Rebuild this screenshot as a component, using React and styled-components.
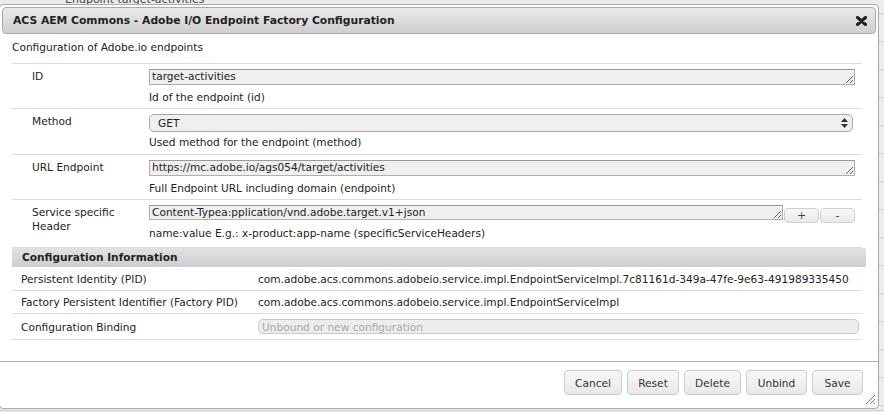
import React from "react";
import styled, { createGlobalStyle } from "styled-components";

const GlobalStyle = createGlobalStyle`
  html, body {
    margin: 0;
    padding: 0;
  }
  body {
    background: #ececec;
    font-family: "DejaVu Sans", Verdana, sans-serif;
    font-size: 10.6px;
    color: #222;
  }
`;

const Page = styled.div`
  position: relative;
  width: 884px;
  height: 412px;
  overflow: hidden;
  background: #ececec;
`;

// the page behind the dialog, only its edges show
const BgTable = styled.div`
  margin-top: -13px;
  display: flex;
  flex-direction: column;
`;

const BgRow = styled.div`
  height: ${(p) => p.h || 26}px;
  line-height: ${(p) => p.h || 26}px;
  border-bottom: 1px solid #cfcfcf;
  padding-left: ${(p) => p.indent || 38}px;
  color: #444;
  font-size: 11px;
  white-space: nowrap;
`;

const Dialog = styled.div`
  position: absolute;
  left: -1px;
  top: 4px;
  width: 880px;
  height: 405px;
  box-sizing: border-box;
  border: 1px solid #a9a9a9;
  border-radius: 4px;
  background: #fff;
  padding: 2px;
  display: flex;
  flex-direction: column;
`;

const TitleBar = styled.div`
  height: 27px;
  box-sizing: border-box;
  border: 1px solid #aaa;
  border-radius: 4px;
  background: linear-gradient(#e9e9e9, #cfcfcf);
  display: flex;
  align-items: center;
  justify-content: space-between;
  padding: 0 8px 0 10px;
`;

const Title = styled.span`
  font-weight: bold;
  font-size: 10.75px;
  color: #222;
`;

const CloseButton = styled.span`
  display: flex;
  width: 12px;
  height: 12px;
  align-items: center;
  justify-content: center;
`;

const Content = styled.div`
  padding: 5px 0 0 10px;
  flex: 1;
`;

const Intro = styled.div`
  line-height: 16px;
  margin-bottom: 8px;
`;

const FormTable = styled.div`
  width: 850px;
  border-top: 1px solid #dcdcdc;
`;

const FormRow = styled.div`
  display: grid;
  grid-template-columns: 137px 1fr;
  border-bottom: 1px solid #dcdcdc;
  padding: ${(p) => p.pad || "5px 0 3px"};
`;

const Label = styled.div`
  padding-left: 20px;
  line-height: 14px;
`;

const Field = styled.div`
  padding-right: 7px;
  display: flex;
  flex-direction: column;
`;

const InputLine = styled.div`
  display: flex;
  align-items: flex-start;
`;

const TextArea = styled.textarea`
  flex: 1;
  height: ${(p) => p.h || 16}px;
  box-sizing: border-box;
  margin: 0;
  border: 1px solid #b0b0b0;
  border-top-color: #999;
  background: #efefef;
  font-family: inherit;
  font-size: inherit;
  color: #222;
  padding: 0 2px;
  line-height: 13px;
  resize: vertical;
  overflow: hidden;
  outline: none;
`;

const SelectWrap = styled.div`
  position: relative;
  margin-right: 2px;
`;

const Select = styled.select`
  appearance: none;
  width: 100%;
  height: 18px;
  box-sizing: border-box;
  margin: 0;
  border: 1px solid #a8a8a8;
  border-radius: 5px;
  background: #efefef;
  font-family: inherit;
  font-size: inherit;
  color: #222;
  padding: 0 8px;
  outline: none;
`;

const SelectArrows = styled.svg`
  position: absolute;
  right: 5px;
  top: 4px;
  pointer-events: none;
`;

const SmallButton = styled.button`
  width: 35px;
  height: 15px;
  margin: 3px 0 0 1px;
  box-sizing: border-box;
  border: 1px solid #d0d0d0;
  border-radius: 4px;
  background: linear-gradient(#f7f7f7, #e9e9e9);
  font-family: inherit;
  font-size: 11px;
  line-height: 11px;
  color: #444;
  padding: 0;
`;

const Description = styled.div`
  line-height: 16px;
  margin-top: ${(p) => p.gap || 4}px;
`;

const InfoTable = styled.div`
  width: 854px;
`;

const InfoHeader = styled.div`
  height: 19px;
  line-height: 19px;
  padding-left: 10px;
  font-weight: bold;
  background: linear-gradient(#e2e2e2, #cdcdcd);
`;

const InfoRow = styled.div`
  display: grid;
  grid-template-columns: 246px 1fr;
  align-items: center;
  min-height: ${(p) => p.h || 23}px;
  border-bottom: 1px solid #dcdcdc;
  width: 850px;
`;

const InfoLabel = styled.div`
  padding-left: 9px;
`;

const InfoValue = styled.div`
  white-space: nowrap;
`;

const BindingInput = styled.input`
  width: 601px;
  height: 15px;
  box-sizing: border-box;
  border: 1px solid #c8c8c8;
  border-radius: 5px;
  background: #ededed;
  font-family: inherit;
  font-size: inherit;
  padding: 0 3px;
  margin: 0;
  &::placeholder {
    color: #a8a8a8;
  }
`;

const ButtonPane = styled.div`
  margin: 0 -2px;
  border-top: 1px solid #b5b5b5;
  display: flex;
  justify-content: flex-end;
  gap: 5px;
  padding: 8px 15px 11px 0;
  position: relative;
`;

const Button = styled.button`
  height: 25px;
  box-sizing: border-box;
  border: 1px solid #cbcbcb;
  border-radius: 4px;
  background: linear-gradient(#f8f8f8, #e8e8e8);
  font-family: inherit;
  font-size: 10.6px;
  color: #333;
  padding: 0;
  width: ${(p) => p.w}px;
`;

const ResizeGrip = styled.svg`
  position: absolute;
  right: 2px;
  bottom: 1px;
`;

const formRows = [
  {
    label: "ID",
    value: "target-activities",
    desc: "Id of the endpoint (id)",
    pad: "5px 0 3px",
  },
  {
    label: "Method",
    select: "GET",
    desc: "Used method for the endpoint (method)",
    pad: "5px 0 4px",
  },
  {
    label: "URL Endpoint",
    value: "https://mc.adobe.io/ags054/target/activities",
    desc: "Full Endpoint URL including domain (endpoint)",
    pad: "5px 0 3px",
  },
  {
    label: ["Service specific", "Header"],
    value: "Content-Typea:pplication/vnd.adobe.target.v1+json",
    desc: "name:value E.g.: x-product:app-name (specificServiceHeaders)",
    multi: true,
    pad: "5px 0 6px",
  },
];

const buttons = [
  { text: "Cancel", w: 58 },
  { text: "Reset", w: 52 },
  { text: "Delete", w: 57 },
  { text: "Unbind", w: 61 },
  { text: "Save", w: 51 },
];

function FormField({ row }) {
  if (row.select) {
    return (
      <Field>
        <SelectWrap>
          <Select defaultValue={row.select}>
            <option>GET</option>
            <option>POST</option>
            <option>PUT</option>
          </Select>
          <SelectArrows width="7" height="10" viewBox="0 0 7 10">
            <path d="M3.5 0 L7 4 L0 4 Z" fill="#333" />
            <path d="M0 6 L7 6 L3.5 10 Z" fill="#333" />
          </SelectArrows>
        </SelectWrap>
        <Description gap={2}>{row.desc}</Description>
      </Field>
    );
  }
  return (
    <Field>
      <InputLine>
        <TextArea rows={1} readOnly value={row.value} h={row.multi ? 15 : 16} />
        {row.multi && (
          <>
            <SmallButton>+</SmallButton>
            <SmallButton>-</SmallButton>
          </>
        )}
      </InputLine>
      <Description gap={row.multi ? 2 : 4}>{row.desc}</Description>
    </Field>
  );
}

export default function App() {
  return (
    <Page>
      <GlobalStyle />
      <BgTable>
        <BgRow indent={65}>Endpoint target-activities</BgRow>
        {Array.from({ length: 14 }).map((_, i) => (
          <BgRow key={i} h={27} />
        ))}
        <BgRow h={4} />
        <BgRow>ACS AEM Commons - Generic Tenant I/O Client Library Loader</BgRow>
      </BgTable>

      <Dialog>
        <TitleBar>
          <Title>ACS AEM Commons - Adobe I/O Endpoint Factory Configuration</Title>
          <CloseButton>
            <svg width="11" height="10" viewBox="0 0 11 10">
              <path
                d="M1.5 1.5 L9.5 8.5 M9.5 1.5 L1.5 8.5"
                stroke="#1e1e1e"
                strokeWidth="3"
                strokeLinecap="round"
              />
            </svg>
          </CloseButton>
        </TitleBar>

        <Content>
          <Intro>Configuration of Adobe.io endpoints</Intro>

          <FormTable>
            {formRows.map((row, i) => (
              <FormRow key={i} pad={row.pad}>
                <Label>
                  {Array.isArray(row.label)
                    ? row.label.map((l) => <div key={l}>{l}</div>)
                    : row.label}
                </Label>
                <FormField row={row} />
              </FormRow>
            ))}
          </FormTable>

          <InfoTable>
            <InfoHeader>Configuration Information</InfoHeader>
            <InfoRow h={23}>
              <InfoLabel>Persistent Identity (PID)</InfoLabel>
              <InfoValue>
                com.adobe.acs.commons.adobeio.service.impl.EndpointServiceImpl.7c81161d-349a-47fe-9e63-491989335450
              </InfoValue>
            </InfoRow>
            <InfoRow h={22}>
              <InfoLabel>Factory Persistent Identifier (Factory PID)</InfoLabel>
              <InfoValue>com.adobe.acs.commons.adobeio.service.impl.EndpointServiceImpl</InfoValue>
            </InfoRow>
            <InfoRow h={25}>
              <InfoLabel>Configuration Binding</InfoLabel>
              <div>
                <BindingInput disabled placeholder="Unbound or new configuration" />
              </div>
            </InfoRow>
          </InfoTable>
        </Content>

        <ButtonPane>
          {buttons.map((b) => (
            <Button key={b.text} w={b.w}>
              {b.text}
            </Button>
          ))}
          <ResizeGrip width="12" height="12" viewBox="0 0 12 12">
            <path d="M11 2 L2 11 M11 6 L6 11 M11 9.5 L9.5 11" stroke="#777" strokeWidth="1" />
          </ResizeGrip>
        </ButtonPane>
      </Dialog>
    </Page>
  );
}
